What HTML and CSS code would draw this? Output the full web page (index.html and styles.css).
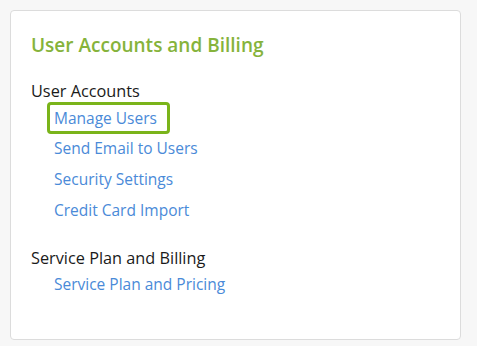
FILE: index.html
```html
<!DOCTYPE html>
<html>
<head>
<meta charset="utf-8">
<link rel="stylesheet" href="styles.css">
</head>
<body>
<div class="card">
  <h2 class="card-title">User Accounts and Billing</h2>
  <div class="section">
    <h3 class="section-title">User Accounts</h3>
    <ul class="links">
      <li><a class="link is-active" href="#">Manage Users</a></li>
      <li><a class="link" href="#">Send Email to Users</a></li>
      <li><a class="link" href="#">Security Settings</a></li>
      <li><a class="link" href="#">Credit Card Import</a></li>
    </ul>
  </div>
  <div class="section">
    <h3 class="section-title">Service Plan and Billing</h3>
    <ul class="links">
      <li><a class="link" href="#">Service Plan and Pricing</a></li>
    </ul>
  </div>
</div>
</body>
</html>
```
FILE: styles.css
```css
html, body {
  margin: 0;
  padding: 0;
  background: #f7f7f7;
}
body {
  padding: 10px 0 0 10px;
  font-family: "Open Sans", "Liberation Sans", sans-serif;
}
.card {
  box-sizing: border-box;
  width: 451px;
  height: 330px;
  background: #fff;
  border: 1px solid #dcdcdc;
  border-radius: 4px;
  padding: 21px 20px 0 20px;
}
.card-title {
  margin: 0 0 22px 0;
  font-size: 19px;
  line-height: 26px;
  font-weight: 600;
  color: #86b33b;
}
.section {
  margin-bottom: 21px;
}
.section-title {
  margin: 0;
  font-size: 16.3px;
  line-height: 22px;
  font-weight: 500;
  color: #1a1a1a;
}
.links {
  list-style: none;
  margin: 0;
  padding: 0 0 0 16px;
}
.link {
  display: inline-block;
  font-size: 15.5px;
  line-height: 25px;
  color: #4a8ad8;
  text-decoration: none;
  padding: 0 10px 0 4px;
  border: 3px solid transparent;
  border-radius: 4px;
}
.link.is-active {
  border-color: #7ab41a;
  padding-top: 1px;
  margin-bottom: -1px;
}
```
